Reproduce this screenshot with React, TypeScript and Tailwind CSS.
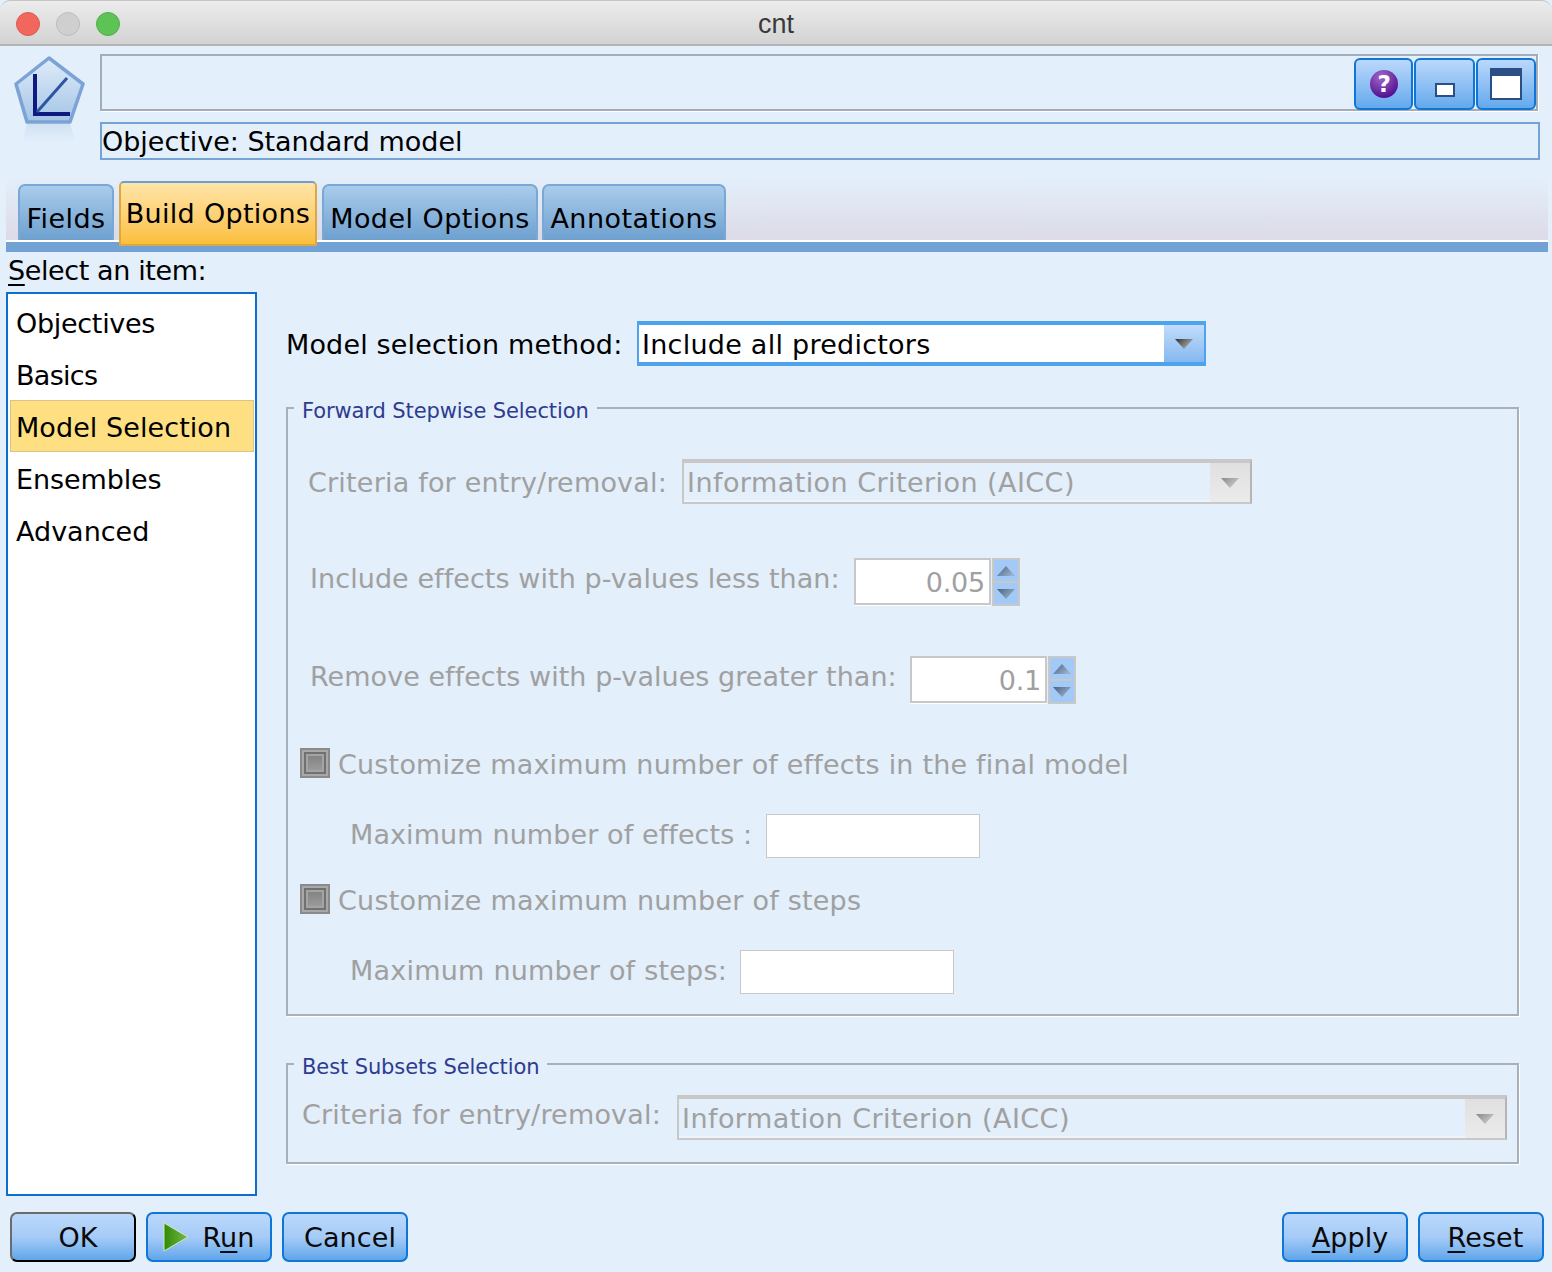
import React from "react";

const Arrow = ({ dim = false, up = false, small = false }: { dim?: boolean; up?: boolean; small?: boolean }) => (
  <svg width="18" height="10" viewBox="0 0 18 10" className={dim ? "opacity-50" : ""}>
    <defs>
      <linearGradient id={up ? "aru" : small ? "ards" : "ard"} x1="0" x2="1" y1="0" y2="0.6">
        <stop offset="0" stopColor={small ? "#485f80" : "#2f2f2f"} />
        <stop offset="1" stopColor={small ? "#9ab0cc" : "#b0b0b0"} />
      </linearGradient>
    </defs>
    <path
      d={up ? "M9 0 L18 10 H0 Z" : "M0 0 H18 L9 10 Z"}
      fill={`url(#${up ? "aru" : small ? "ards" : "ard"})`}
    />
  </svg>
);

const Combo = ({ text, width }: { text: string; width: string }) => (
  <div className={`${width} h-[45px] flex border-t-[4px] border-b-[2px] border-y-[#c8c8c8] border-r-[2px] border-r-[#b5b5b5] border-l-[2px] border-l-[#c8c8c8]`}>
    <div className="flex-1 flex items-center pl-[3px] pt-[2px] text-[#a0a0a0] tracking-[0.44px] border-b-2 border-[#eef4fb]">{text}</div>
    <div className="w-[40px] flex items-center justify-center bg-gradient-to-b from-[#e0e0e0] to-[#ebebeb]">
      <Arrow dim />
    </div>
  </div>
);

const Spinner = ({ value }: { value: string }) => (
  <div className="flex h-[48px] gap-[1px]">
    <div className="w-[137px] h-[47px] bg-white border-2 border-[#c8c8c8] shadow-[0_1px_0_#fff] flex items-center justify-end pr-[4px] pt-[2px] text-[#a0a0a0]">
      {value}
    </div>
    <div className="w-[28px] flex flex-col border-2 border-[#c8c8c8] bg-[#a3c9f7]">
      <div className="flex-1 flex items-center justify-center border-b-2 border-[#c8c8c8]"><Arrow up small /></div>
      <div className="flex-1 flex items-center justify-center"><Arrow small /></div>
    </div>
  </div>
);

const CheckBox = () => (
  <div className="w-[30px] h-[30px] shrink-0 bg-[#a8a8a8] border-[2px] border-[#8a8a8a] p-[2px]">
    <div className="w-full h-full border-[2px] border-[#717171] p-[2px] bg-[#a4a4a4]">
      <div className="w-full h-full bg-gradient-to-b from-[#848484] to-[#9a9a9a]" />
    </div>
  </div>
);

const Btn = ({ children, isDefault = false }: { children: React.ReactNode; isDefault?: boolean }) => (
  <button
    className={`w-[126px] h-[50px] rounded-[7px] border-2 flex items-center justify-center pt-[2px] bg-gradient-to-b from-[#bbd8fb] via-[#a5cbf7] to-[#5fa6ea] text-[#0a0a0a] tracking-[0.1px] ${
      isDefault ? "border-l-[#6b6b6b] border-t-[#6b6b6b] border-r-black border-b-black" : "border-[#0f75d6]"
    }`}
  >
    {children}
  </button>
);

const Tab = ({ label, width }: { label: string; width: string }) => (
  <div className={`${width} h-[56px] rounded-t-[7px] border-2 border-b-0 border-[#79a7d6] bg-gradient-to-b from-[#a9cceb] to-[#6ea0cf] flex items-center justify-center pt-[12px] text-black tracking-[0.45px]`}>
    {label}
  </div>
);

const HeadBtn = ({ children, width }: { children: React.ReactNode; width: string }) => (
  <div className={`${width} h-[52px] mt-[3px] rounded-[6px] border-2 border-[#0f75d6] bg-gradient-to-b from-[#bbd8fb] to-[#63a9ec] flex items-center justify-center relative`}>
    {children}
  </div>
);

const Group = ({ title, className, children }: { title: string; className: string; children: React.ReactNode }) => (
  <div className={`relative border-2 border-[#a7b0bb] shadow-[1px_1px_0_#fff] ${className}`}>
    <span className="absolute left-[6px] top-[-11px] px-[8px] bg-[#e3effb] text-[21px] leading-[26px] tracking-[-0.1px] text-[#2e3c90]">
      {title}
    </span>
    {children}
  </div>
);

const listItems = [
  { label: "Objectives", track: "tracking-[-0.3px]" },
  { label: "Basics", track: "tracking-[-0.7px]" },
  { label: "Model Selection", track: "tracking-[0.07px]" },
  { label: "Ensembles", track: "tracking-[-0.1px]" },
  { label: "Advanced", track: "tracking-[0px]" },
];

export default function App() {
  return (
    <div className="w-[1552px] h-[1272px] overflow-hidden flex flex-col bg-[#e3effb] font-['DejaVu_Sans',sans-serif] text-[27px] leading-[32px] tracking-[-0.2px] text-black">
      {/* Title bar */}
      <div className="relative h-[46px] shrink-0 rounded-t-[10px] border-t border-[#c4c4c4] border-b-2 border-b-[#b3b3b3] bg-gradient-to-b from-[#ececec] to-[#d3d3d3] flex items-center justify-center">
        <div className="absolute left-[16px] top-[11px] flex gap-[16px]">
          <div className="w-[24px] h-[24px] rounded-full bg-[#f1675d] border border-[#dc5a50]" />
          <div className="w-[24px] h-[24px] rounded-full bg-[#cfcfcf] border border-[#bdbdbd]" />
          <div className="w-[24px] h-[24px] rounded-full bg-[#5cc354] border border-[#50ae49]" />
        </div>
        <span className="font-['Liberation_Sans',sans-serif] text-[27px] text-[#3a3a3a] tracking-normal pt-[3px]">cnt</span>
      </div>

      {/* Header */}
      <div className="flex h-[129px] shrink-0">
        <div className="w-[100px] pl-[14px] pt-[10px] shrink-0">
          <svg width="72" height="90" viewBox="0 0 72 90">
            <defs>
              <linearGradient id="pent" x1="0" x2="0" y1="0" y2="1">
                <stop offset="0" stopColor="#e0ecf9" />
                <stop offset="1" stopColor="#a3c4e6" />
              </linearGradient>
              <linearGradient id="refl" x1="0" x2="0" y1="0" y2="1">
                <stop offset="0" stopColor="#c9dbee" />
                <stop offset="1" stopColor="#e3effb" />
              </linearGradient>
            </defs>
            <path d="M13 68 H56 L62 86 H8 Z" fill="url(#refl)" opacity="0.7" />
            <path d="M35 2 L69 28 L56 66 L13 66 L2 28 Z" fill="url(#pent)" stroke="#7ba3d6" strokeWidth="3.5" strokeLinejoin="round" />
            <path d="M21 18 V58 H56" fill="none" stroke="#0e1a80" strokeWidth="4" />
            <path d="M23 56 L53 22" stroke="#2c55a5" strokeWidth="3" />
          </svg>
        </div>
        <div className="flex-1 pr-[14px] pt-[8px]">
          <div className="h-[57px] border-2 border-[#a3adb9] shadow-[1px_1px_0_#fff] flex justify-end items-center gap-[1px]">
            <HeadBtn width="w-[59px]">
              <svg width="30" height="30" viewBox="0 0 30 30">
                <defs>
                  <radialGradient id="q" cx="0.4" cy="0.25" r="0.8">
                    <stop offset="0" stopColor="#a268c9" />
                    <stop offset="1" stopColor="#4c0a8c" />
                  </radialGradient>
                </defs>
                <circle cx="15" cy="15" r="14" fill="url(#q)" />
                <text x="15" y="23" textAnchor="middle" fontSize="23" fontWeight="700" fill="#fff">?</text>
              </svg>
            </HeadBtn>
            <HeadBtn width="w-[61px]">
              <div className="w-[20px] h-[14px] mt-[12px] bg-white border-[2px] border-[#2b4f85]" />
            </HeadBtn>
            <HeadBtn width="w-[60px]">
              <div className="w-[32px] h-[32px] bg-white border-[2px] border-t-[8px] border-[#2b4f85]" />
            </HeadBtn>
          </div>
          <div className="mt-[11px] h-[38px] mr-[-2px] border-2 border-[#75a4d4] flex items-center pt-[2px] tracking-[-0.03px]">
            Objective: Standard model
          </div>
        </div>
      </div>

      {/* Tabs */}
      <div className="ml-[6px] mr-[4px] h-[75px] shrink-0 flex flex-col justify-end bg-gradient-to-b from-[#e3effb] to-[#dcdae6] border-b-[10px] border-[#72a2d3] mt-[2px] relative">
        <div className="flex items-end gap-[4px] pl-[12px] border-b-2 border-white h-[62px]">
          <Tab label="Fields" width="w-[96px]" />
          <div className="w-[198px] h-[65px] rounded-t-[5px] border-2 border-[#dba93f] border-t-[#6f9fd2] bg-gradient-to-b from-[#ffe5a6] to-[#fcbf3a] flex items-start justify-center pt-[15px] z-10 mb-[-6px] mx-[1px] shrink-0 tracking-[0.3px]">
            Build Options
          </div>
          <Tab label="Model Options" width="w-[216px]" />
          <Tab label="Annotations" width="w-[184px]" />
        </div>
      </div>

      <div className="flex-1 min-h-0 flex flex-col px-[6px]">
        <div className="flex flex-1 min-h-0">
          {/* Left list */}
          <div className="w-[251px] shrink-0 flex flex-col">
            <div className="h-[40px] pl-[2px] pt-[3px] shrink-0 tracking-[-0.4px]">
              <span className="underline underline-offset-[4px] decoration-2">S</span>elect an item:
            </div>
            <div className="w-[251px] h-[904px] border-2 border-[#0c6fce] bg-white pt-[2px] px-[2px]">
              {listItems.map((item) => (
                <div
                  key={item.label}
                  className={`h-[52px] flex items-center pt-[4px] ${item.track} ${
                    item.label === "Model Selection" ? "bg-[#fee082] border border-[#d8c489] w-[244px] pl-[5px]" : "pl-[6px]"
                  }`}
                >
                  {item.label}
                </div>
              ))}
            </div>
          </div>

          {/* Right panel */}
          <div className="flex-1 pl-[29px] pr-[27px] pt-[69px]">
            <div className="flex items-center h-[45px]">
              <span className="w-[351px] shrink-0 pt-[2px] tracking-[0.15px]">Model selection method:</span>
              <div className="w-[569px] h-[45px] flex border-y-[4px] border-[#4ea3ee] border-x-[2px] border-x-[#4ea3ee]">
                <div className="flex-1 bg-white flex items-center pl-[3px] pt-[2px] tracking-[0.25px]">Include all predictors</div>
                <div className="w-[40px] bg-gradient-to-b from-[#c2dcfb] to-[#84b9ef] flex items-center justify-center">
                  <Arrow />
                </div>
              </div>
            </div>

            <Group title="Forward Stepwise Selection" className="mt-[41px] h-[609px]">
              <div className="flex items-center h-[45px] mt-[50px] pl-[20px] text-[#a0a0a0]">
                <span className="w-[374px] shrink-0 pt-[2px] tracking-[0.2px]">Criteria for entry/removal:</span>
                <Combo text="Information Criterion (AICC)" width="w-[570px]" />
              </div>
              <div className="flex items-center h-[48px] mt-[54px] pl-[22px] text-[#a0a0a0]">
                <span className="w-[544px] shrink-0 pb-[6px] tracking-[0.07px]">Include effects with p-values less than:</span>
                <Spinner value="0.05" />
              </div>
              <div className="flex items-center h-[48px] mt-[50px] pl-[22px] text-[#a0a0a0]">
                <span className="w-[600px] shrink-0 pb-[6px] tracking-[0.04px]">Remove effects with p-values greater than:</span>
                <Spinner value="0.1" />
              </div>
              <div className="flex items-center h-[30px] mt-[44px] pl-[12px] gap-[8px] text-[#a0a0a0]">
                <CheckBox />
                <span className="pt-[3px] tracking-[0.19px]">Customize maximum number of effects in the final model</span>
              </div>
              <div className="flex items-center h-[44px] mt-[36px] pl-[62px] text-[#a0a0a0]">
                <span className="w-[416px] shrink-0 pb-[2px] tracking-[0.1px]">Maximum number of effects :</span>
                <div className="w-[214px] h-[44px] bg-white border border-[#c8c8c8]" />
              </div>
              <div className="flex items-center h-[30px] mt-[26px] pl-[12px] gap-[8px] text-[#a0a0a0]">
                <CheckBox />
                <span className="pt-[3px] tracking-[0.22px]">Customize maximum number of steps</span>
              </div>
              <div className="flex items-center h-[44px] mt-[36px] pl-[62px] text-[#a0a0a0]">
                <span className="w-[390px] shrink-0 pb-[2px] tracking-[0.22px]">Maximum number of steps:</span>
                <div className="w-[214px] h-[44px] bg-white border border-[#c8c8c8]" />
              </div>
            </Group>

            <Group title="Best Subsets Selection" className="mt-[47px] h-[101px]">
              <div className="flex items-center h-[45px] mt-[30px] pl-[14px] text-[#a0a0a0]">
                <span className="w-[375px] shrink-0 pb-[6px] tracking-[0.2px]">Criteria for entry/removal:</span>
                <Combo text="Information Criterion (AICC)" width="w-[830px]" />
              </div>
            </Group>
          </div>
        </div>

        {/* Footer */}
        <div className="h-[76px] shrink-0 flex items-start justify-between pt-[16px] pl-[4px] pr-[2px]">
          <div className="flex gap-[10px]">
            <Btn isDefault><span className="pl-[10px]">OK</span></Btn>
            <Btn>
              <svg width="26" height="30" viewBox="0 0 26 30" className="mr-[13px] mt-[-2px]">
                <defs>
                  <linearGradient id="run" x1="0" x2="1" y1="0" y2="0">
                    <stop offset="0" stopColor="#2f8a05" />
                    <stop offset="1" stopColor="#74bb4c" />
                  </linearGradient>
                </defs>
                <path d="M1 1 L25 15 L1 29 Z" fill="url(#run)" stroke="#d6e6b8" strokeWidth="1" />
              </svg>
              <span>R<span className="underline underline-offset-[4px] decoration-2">u</span>n</span>
            </Btn>
            <Btn><span className="pl-[10px]">Cancel</span></Btn>
          </div>
          <div className="flex gap-[10px]">
            <Btn><span className="pl-[10px]"><span className="underline underline-offset-[4px] decoration-2">A</span>pply</span></Btn>
            <Btn><span className="pl-[9px]"><span className="underline underline-offset-[4px] decoration-2">R</span>eset</span></Btn>
          </div>
        </div>
      </div>
    </div>
  );
}
